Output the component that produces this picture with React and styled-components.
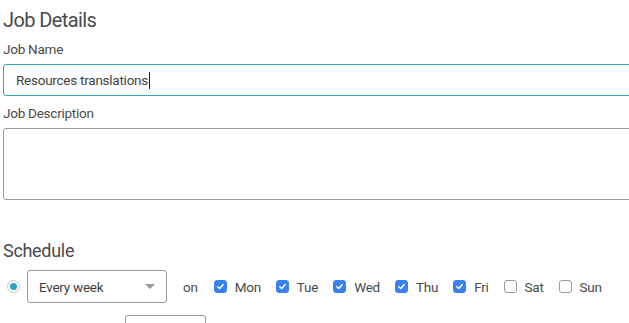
import React from "react";
import styled, { createGlobalStyle } from "styled-components";

const GlobalStyle = createGlobalStyle`
  body {
    margin: 0;
    background: #fff;
    font-family: Roboto, "Liberation Sans", sans-serif;
    color: #4a4a4a;
  }
`;

const days = [
  { name: "Mon", checked: true },
  { name: "Tue", checked: true },
  { name: "Wed", checked: true },
  { name: "Thu", checked: true },
  { name: "Fri", checked: true },
  { name: "Sat", checked: false },
  { name: "Sun", checked: false },
];

const Check = () => (
  <svg width="9" height="9" viewBox="0 0 10 10">
    <path d="M2 5.2 L4.2 7.3 L8 2.8" fill="none" stroke="#fff" strokeWidth="1.6" strokeLinecap="round" strokeLinejoin="round" />
  </svg>
);

export default function App() {
  return (
    <>
      <GlobalStyle />
      <Page>
        <Title>Job Details</Title>
        <Label>Job Name</Label>
        <NameInput>
          Resources translations<Caret />
        </NameInput>
        <Label $gap={8}>Job Description</Label>
        <DescriptionBox />
        <SectionTitle>Schedule</SectionTitle>
        <ScheduleRow>
          <Radio />
          <Select>
            <span>Every week</span>
            <Arrow />
          </Select>
          <OnText>on</OnText>
          <Days>
            {days.map((d) => (
              <Day key={d.name}>
                <Box $checked={d.checked}>{d.checked && <Check />}</Box>
                <DayName>{d.name}</DayName>
              </Day>
            ))}
          </Days>
        </ScheduleRow>
        <SecondRow>
          <SmallBox />
        </SecondRow>
      </Page>
    </>
  );
}

const Page = styled.div`
  width: 629px;
  height: 323px;
  overflow: hidden;
  padding: 6px 0 0 3px;
  box-sizing: border-box;
  letter-spacing: -0.25px;
`;

const Title = styled.h1`
  margin: 0;
  font-size: 20px;
  font-weight: 400;
  line-height: 28px;
  letter-spacing: -0.6px;
  color: #4a4a4a;
`;

const Label = styled.div`
  font-size: 13.5px;
  line-height: 18px;
  margin-top: ${(p) => p.$gap ?? 6}px;
  color: #4a4a4a;
`;

const NameInput = styled.div`
  margin-top: 6px;
  width: 700px;
  height: 32px;
  box-sizing: border-box;
  border: 1px solid #31a6bf;
  border-radius: 3px;
  padding: 0 12px;
  display: flex;
  align-items: center;
  font-size: 13.5px;
  color: #3f3f3f;
`;

const Caret = styled.span`
  display: inline-block;
  width: 1px;
  height: 17px;
  background: #222;
  margin-left: 1px;
`;

const DescriptionBox = styled.div`
  margin-top: 6px;
  width: 700px;
  height: 72px;
  box-sizing: border-box;
  border: 1px solid #999;
  border-radius: 3px;
`;

const SectionTitle = styled.h2`
  margin: 39px 0 0;
  font-size: 18px;
  font-weight: 400;
  line-height: 24px;
  letter-spacing: -0.3px;
  color: #4a4a4a;
`;

const ScheduleRow = styled.div`
  display: flex;
  align-items: center;
  margin-top: 7px;
  padding-left: 4px;
`;

const Radio = styled.span`
  width: 13px;
  height: 13px;
  box-sizing: border-box;
  border: 1px solid #c8c8c8;
  border-radius: 50%;
  display: flex;
  align-items: center;
  justify-content: center;
  &::after {
    content: "";
    width: 7px;
    height: 7px;
    border-radius: 50%;
    background: #2aa5c2;
  }
`;

const Select = styled.div`
  margin-left: 7px;
  width: 140px;
  height: 33px;
  box-sizing: border-box;
  border: 1px solid #999;
  border-radius: 3px;
  display: flex;
  align-items: center;
  justify-content: space-between;
  padding: 0 11px 0 11px;
  font-size: 13.5px;
  color: #3f3f3f;
`;

const Arrow = styled.span`
  width: 0;
  height: 0;
  border-left: 5px solid transparent;
  border-right: 5px solid transparent;
  border-top: 5px solid #999;
`;

const OnText = styled.span`
  margin-left: 16px;
  font-size: 13.5px;
`;

const Days = styled.div`
  display: flex;
  align-items: center;
  gap: 15px;
  margin-left: 16px;
`;

const Day = styled.label`
  display: flex;
  align-items: center;
  gap: 8px;
`;

const Box = styled.span`
  width: 13px;
  height: 13px;
  box-sizing: border-box;
  border-radius: 3px;
  display: flex;
  align-items: center;
  justify-content: center;
  background: ${(p) => (p.$checked ? "#3a82f0" : "#fff")};
  border: 1px solid ${(p) => (p.$checked ? "#3a82f0" : "#9a9a9a")};
`;

const DayName = styled.span`
  font-size: 13.5px;
  color: #4a4a4a;
`;

const SecondRow = styled.div`
  display: flex;
  margin-top: 12px;
  padding-left: 122px;
`;

const SmallBox = styled.div`
  width: 81px;
  height: 32px;
  box-sizing: border-box;
  border: 1px solid #999;
  border-radius: 3px;
`;
